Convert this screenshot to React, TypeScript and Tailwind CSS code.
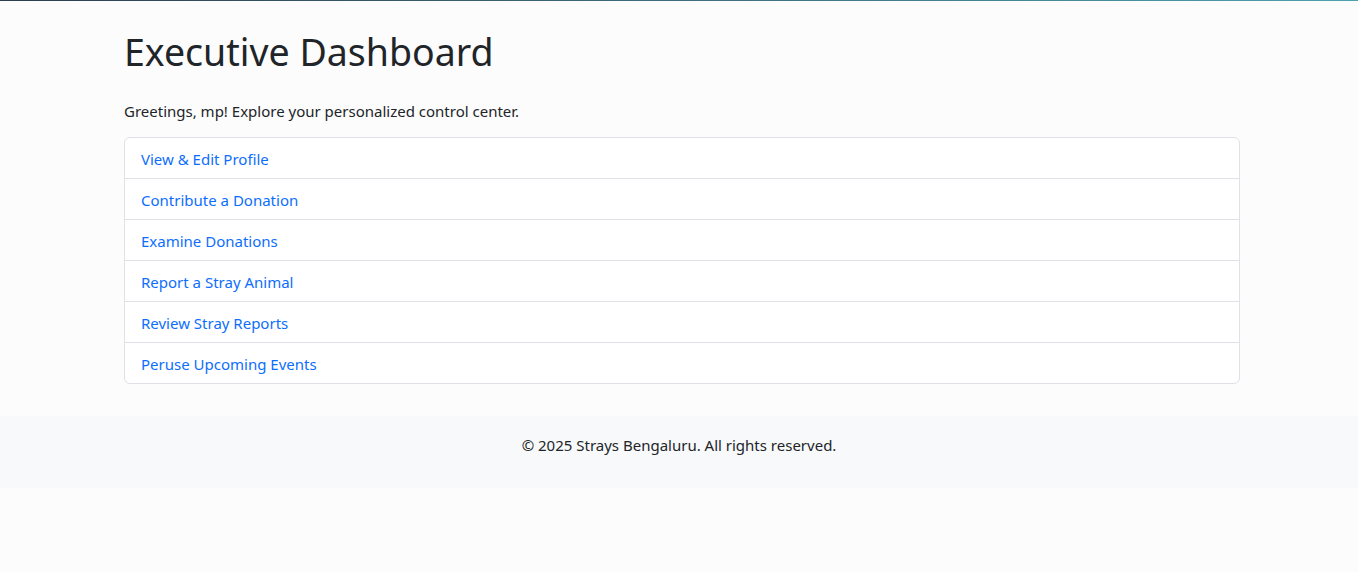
const links = [
  'View & Edit Profile',
  'Contribute a Donation',
  'Examine Donations',
  'Report a Stray Animal',
  'Review Stray Reports',
  'Peruse Upcoming Events',
];

export default function App() {
  return (
    <div className="min-h-[572px] bg-[#fcfcfc] font-['Noto_Sans',sans-serif] text-[#212529]">
      <div className="h-px bg-gradient-to-r from-[#2c3e50] to-[#4ca1af]" />
      <main className="ml-[112px] w-[1140px] px-3 pt-[27px] mb-[32px]">
        <h1 className="mb-[23px] text-[37.5px] leading-[48px] font-normal">Executive Dashboard</h1>
        <p className="mb-[14px] text-[15px] leading-6">Greetings, mp! Explore your personalized control center.</p>
        <ul className="overflow-hidden rounded-md border border-[#dee2e6] bg-white">
          {links.map((label, i) => (
            <li key={label} className={i > 0 ? 'border-t border-[#dee2e6]' : ''}>
              <a href="#" className="block px-4 pt-[9px] pb-[7px] text-[15px] leading-6 text-[#0d6efd]">
                {label}
              </a>
            </li>
          ))}
        </ul>
      </main>
      <footer className="bg-[#f8f9fa] pt-[17px] pb-[31px] text-center text-[15px] leading-6">
        © 2025 Strays Bengaluru. All rights reserved.
      </footer>
    </div>
  );
}
